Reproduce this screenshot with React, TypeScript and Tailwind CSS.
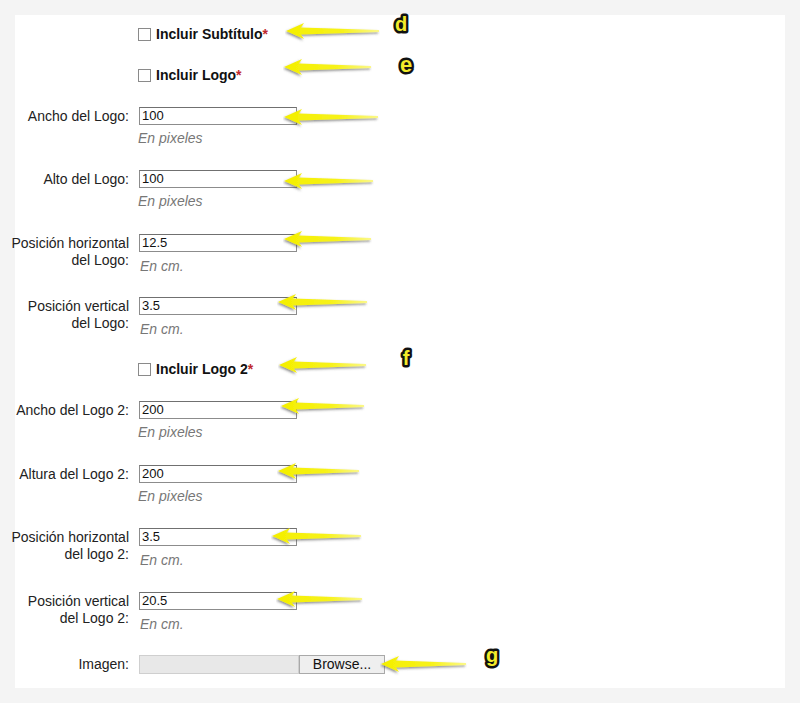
import { type ReactNode } from 'react'

// Yellow callout arrow pointing left, with a soft shadow under the head
function Arrow({ left, top, length }: { left: number; top: number; length: number }) {
  const h = 20
  const m = h / 2
  return (
    <svg
      className="absolute pointer-events-none"
      style={{ left, top: top - m }}
      width={length + 4}
      height={h + 4}
      viewBox={`0 0 ${length + 4} ${h + 4}`}
    >
      <defs>
        <linearGradient id={`ag-${left}-${top}`} x1="0" x2="1" y1="0" y2="0">
          <stop offset="0" stopColor="#f4ef00" />
          <stop offset="0.6" stopColor="#f7f21a" />
          <stop offset="1" stopColor="#fbf88a" />
        </linearGradient>
        <filter id={`as-${left}-${top}`} x="-10%" y="-30%" width="130%" height="180%">
          <feDropShadow dx="-1" dy="1.5" stdDeviation="1" floodColor="#444" floodOpacity="0.6" />
        </filter>
      </defs>
      <path
        d={`M1,${m} L19,${m - 8} L16,${m - 3.5} L${length},${m - 1} L${length},${m + 1} L16,${m + 3.5} L19,${m + 8} Z`}
        fill={`url(#ag-${left}-${top})`}
        filter={`url(#as-${left}-${top})`}
      />
    </svg>
  )
}

// Step letter drawn as yellow text with a thick black outline
function Marker({ left, top, letter, size }: { left: number; top: number; letter: string; size: number }) {
  return (
    <svg className="absolute pointer-events-none" style={{ left, top }} width={size + 10} height={size + 10}>
      <text
        x={(size + 10) / 2}
        y={size + 2}
        textAnchor="middle"
        fontFamily="'Liberation Sans', Arial, sans-serif"
        fontWeight="bold"
        fontSize={size}
        fill="#f4ec2a"
        stroke="#111"
        strokeWidth={5}
        strokeLinejoin="round"
        paintOrder="stroke"
      >
        {letter}
      </text>
    </svg>
  )
}

function CheckRow({ label, mt, children }: { label: string; mt: number; children?: ReactNode }) {
  return (
    <div className="relative flex items-center h-[18px]" style={{ marginTop: mt }}>
      <div className="w-[123px] shrink-0" />
      <span className="w-[13px] h-[13px] border border-[#8a8a8a] bg-white shrink-0" />
      <span className="ml-[5px] text-[14px] font-bold text-[#111]">
        {label}
        <span className="text-[#c0282d]">*</span>
      </span>
      {children}
    </div>
  )
}

function Label({ lines }: { lines: string[] }) {
  return (
    <div className="w-[114px] shrink-0 text-right text-[14px] leading-[17px] text-[#222] whitespace-nowrap pt-[1px] flex flex-col items-end">
      {lines.map((l) => (
        <span key={l}>{l}</span>
      ))}
    </div>
  )
}

function FieldRow({
  lines,
  value,
  hint,
  h,
  children,
}: {
  lines: string[]
  value: string
  hint: string
  h: number
  children?: ReactNode
}) {
  return (
    <div className="relative flex items-start" style={{ height: h }}>
      <Label lines={lines} />
      <div className="ml-[10px] flex flex-col">
        <div className="w-[158px] h-[18px] border border-[#8c8c8c] border-t-[#707070] bg-white text-[13px] leading-[16px] pl-[2px] text-[#111]">
          {value}
        </div>
        <span className={`text-[14px] italic text-[#777] leading-[18px] ${lines.length > 1 ? 'mt-[5px] ml-[1px]' : 'mt-[4px] -ml-[1px]'}`}>
          {hint}
        </span>
      </div>
      {children}
    </div>
  )
}

export default function App() {
  return (
    <div className="min-h-[703px] bg-[#f4f4f4] p-[15px] font-['Liberation_Sans',Arial,sans-serif]">
      <div className="relative bg-white h-[673px] w-[770px] pt-[10px]">
        <CheckRow label="Incluir Subtítulo" mt={0}>
          <Arrow left={270} top={6} length={94} />
          <Marker left={371} top={-16} letter="d" size={20} />
        </CheckRow>
        <CheckRow label="Incluir Logo" mt={23}>
          <Arrow left={268} top={1} length={88} />
          <Marker left={375} top={-18} letter="e" size={22} />
        </CheckRow>

        <div className="mt-[23px]">
          <FieldRow lines={['Ancho del Logo:']} value="100" hint="En pixeles" h={63}>
            <Arrow left={268} top={10} length={95} />
          </FieldRow>
          <FieldRow lines={['Alto del Logo:']} value="100" hint="En pixeles" h={64}>
            <Arrow left={268} top={11} length={90} />
          </FieldRow>
          <FieldRow lines={['Posición horizontal', 'del Logo:']} value="12.5" hint="En cm." h={63}>
            <Arrow left={268} top={5} length={88} />
          </FieldRow>
          <FieldRow lines={['Posición vertical', 'del Logo:']} value="3.5" hint="En cm." h={63}>
            <Arrow left={262} top={5} length={90} />
          </FieldRow>
        </div>

        <CheckRow label="Incluir Logo 2" mt={0}>
          <Arrow left={263} top={5} length={88} />
          <Marker left={376} top={-17} letter="f" size={20} />
        </CheckRow>

        <div className="mt-[23px]">
          <FieldRow lines={['Ancho del Logo 2:']} value="200" hint="En pixeles" h={64}>
            <Arrow left={265} top={5} length={84} />
          </FieldRow>
          <FieldRow lines={['Altura del Logo 2:']} value="200" hint="En pixeles" h={63}>
            <Arrow left={262} top={6} length={82} />
          </FieldRow>
          <FieldRow lines={['Posición horizontal', 'del logo 2:']} value="3.5" hint="En cm." h={64}>
            <Arrow left={256} top={8} length={90} />
          </FieldRow>
          <FieldRow lines={['Posición vertical', 'del Logo 2:']} value="20.5" hint="En cm." h={63}>
            <Arrow left={261} top={7} length={86} />
          </FieldRow>
        </div>

        {/* File picker */}
        <div className="relative flex items-start h-[19px]">
          <div className="w-[114px] shrink-0 text-right text-[14px] leading-[19px] text-[#222]">Imagen:</div>
          <div className="ml-[10px] flex h-[19px]">
            <div className="w-[160px] bg-[#e8e8e8] border border-[#cfcfcf]" />
            <div className="w-[86px] bg-[#efefef] border border-[#a9a9a9] text-[14px] leading-[17px] text-center text-[#111]">
              Browse...
            </div>
          </div>
          <Arrow left={365} top={9} length={86} />
          <Marker left={462} top={-15} letter="g" size={20} />
        </div>
      </div>
    </div>
  )
}
